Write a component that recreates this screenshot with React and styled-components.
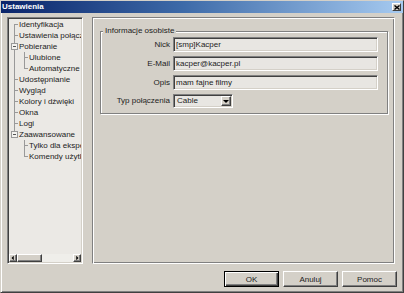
import React from 'react';
import styled, { createGlobalStyle } from 'styled-components';

const GlobalStyle = createGlobalStyle`
  html, body {
    margin: 0;
    padding: 0;
    background: #d4d0c8;
  }
  body {
    font-family: "Liberation Sans", Arial, sans-serif;
    font-size: 8px;
    color: #1c1c1c;
  }
`;

const treeItems = [
  { label: 'Identyfikacja', level: 0, first: true },
  { label: 'Ustawienia połączeń', level: 0 },
  { label: 'Pobieranie', level: 0, expander: true },
  { label: 'Ulubione', level: 1, through: true },
  { label: 'Automatyczne pobieranie', level: 1, through: true, last: true },
  { label: 'Udostępnianie', level: 0 },
  { label: 'Wygląd', level: 0 },
  { label: 'Kolory i dźwięki', level: 0 },
  { label: 'Okna', level: 0 },
  { label: 'Logi', level: 0 },
  { label: 'Zaawansowane', level: 0, last: true, expander: true },
  { label: 'Tylko dla ekspertów', level: 1 },
  { label: 'Komendy użytkownika', level: 1, last: true },
];

const fields = [
  { label: 'Nick', value: '[smp]Kacper' },
  { label: 'E-Mail', value: 'kacper@kacper.pl' },
  { label: 'Opis', value: 'mam fajne filmy' },
];

const ArrowIcon = ({ dir }) => {
  const pts = {
    left: '5,1 5,7 2,4',
    right: '3,1 3,7 6,4',
    down: '1,3 7,3 4,6',
  };
  return (
    <svg width="8" height="8" viewBox="0 0 8 8">
      <polygon points={pts[dir]} fill="#000" />
    </svg>
  );
};

const App = () => {
  return (
    <>
      <GlobalStyle />
      <Window>
        <TitleBar>
          <TitleText>Ustawienia</TitleText>
          <CloseButton aria-label="Zamknij">
            <svg width="6" height="5" viewBox="0 0 6 5">
              <path d="M0.5 0.5L5.5 4.5M5.5 0.5L0.5 4.5" stroke="#000" strokeWidth="1.4" />
            </svg>
          </CloseButton>
        </TitleBar>

        <Body>
          <ContentRow>
            <TreeBox>
              <TreeList>
                {treeItems.map((item) => (
                  <TreeRow
                    key={item.label}
                    $level={item.level}
                    $first={item.first}
                    $last={item.last}
                    $through={item.through}
                  >
                    {item.expander && <Expander />}
                    {item.label}
                  </TreeRow>
                ))}
              </TreeList>
              <HScroll>
                <ScrollButton><ArrowIcon dir="left" /></ScrollButton>
                <ScrollTrack>
                  <ScrollThumb />
                </ScrollTrack>
                <ScrollButton><ArrowIcon dir="right" /></ScrollButton>
              </HScroll>
            </TreeBox>

            <Panel>
              <GroupBox>
                <Legend>Informacje osobiste</Legend>
                <FieldGrid>
                  {fields.map((f) => (
                    <React.Fragment key={f.label}>
                      <FieldLabel>{f.label}</FieldLabel>
                      <TextField readOnly value={f.value} />
                    </React.Fragment>
                  ))}
                  <FieldLabel $short>Typ połączenia</FieldLabel>
                  <Combo>
                    <ComboValue>Cable</ComboValue>
                    <ComboButton><ArrowIcon dir="down" /></ComboButton>
                  </Combo>
                </FieldGrid>
              </GroupBox>
            </Panel>
          </ContentRow>

          <ButtonRow>
            <DialogButton $default>OK</DialogButton>
            <DialogButton>Anuluj</DialogButton>
            <DialogButton>Pomoc</DialogButton>
          </ButtonRow>
        </Body>
      </Window>
    </>
  );
};

// okno
const Window = styled.div`
  width: 404px;
  height: 293px;
  box-sizing: border-box;
  display: flex;
  flex-direction: column;
  background: #d4d0c8;
  border: 1px solid;
  border-color: #d4d0c8 #404040 #404040 #d4d0c8;
  box-shadow: inset 1px 1px #fff, inset -1px -1px #808080;
`;

const TitleBar = styled.div`
  height: 12px;
  flex-shrink: 0;
  display: flex;
  align-items: center;
  justify-content: space-between;
  padding: 0 2px 0 1px;
  background: linear-gradient(90deg, #0a246a 0%, #3d6aa8 45%, #a6caf0 100%);
`;

const TitleText = styled.span`
  color: #fff;
  font-weight: bold;
  font-size: 8px;
  line-height: 12px;
`;

const CloseButton = styled.button`
  width: 9px;
  height: 8px;
  padding: 0;
  display: flex;
  align-items: center;
  justify-content: center;
  background: #d4d0c8;
  border: 1px solid;
  border-color: #fff #404040 #404040 #fff;
`;

const Body = styled.div`
  flex: 1;
  display: flex;
  flex-direction: column;
  padding: 4px 6px 0 6px;
`;

const ContentRow = styled.div`
  display: flex;
  gap: 9px;
  height: 247px;
`;

// drzewko
const TreeBox = styled.div`
  width: 76px;
  box-sizing: border-box;
  display: flex;
  flex-direction: column;
  padding: 1px;
  background: #ebe9e5;
  border: 1px solid;
  border-color: #808080 #fff #fff #808080;
  box-shadow: inset 1px 1px #404040, inset -1px -1px #d4d0c8;
`;

const TreeList = styled.div`
  flex: 1;
  overflow: hidden;
`;

const TreeRow = styled.div`
  position: relative;
  height: 11px;
  line-height: 11px;
  padding-left: ${({ $level }) => ($level ? 20 : 10)}px;
  white-space: nowrap;
  overflow: hidden;
  background: ${({ $through }) =>
    $through ? 'linear-gradient(#999, #999) 5px 0 / 1px 100% no-repeat' : 'none'};

  &::before {
    content: '';
    position: absolute;
    left: ${({ $level }) => ($level ? 15 : 5)}px;
    top: ${({ $first }) => ($first ? '5px' : '0')};
    bottom: ${({ $last }) => ($last ? '5px' : '0')};
    border-left: 1px solid #999;
  }

  &::after {
    content: '';
    position: absolute;
    left: ${({ $level }) => ($level ? 15 : 5)}px;
    top: 5px;
    width: 4px;
    border-top: 1px solid #999;
  }
`;

const Expander = styled.span`
  position: absolute;
  left: 2px;
  top: 2px;
  width: 7px;
  height: 7px;
  box-sizing: border-box;
  border: 1px solid #999;
  background: #f4f3f0;
  z-index: 1;

  &::before {
    content: '';
    position: absolute;
    left: 1px;
    top: 2px;
    width: 3px;
    border-top: 1px solid #555;
  }
`;

const HScroll = styled.div`
  height: 8px;
  display: flex;
`;

const raised = `
  box-sizing: border-box;
  background: #d4d0c8;
  border: 1px solid;
  border-color: #fff #404040 #404040 #fff;
  box-shadow: inset -1px -1px #808080;
`;

const ScrollButton = styled.div`
  ${raised}
  width: 8px;
  height: 8px;
  display: flex;
  align-items: center;
  justify-content: center;

  svg {
    width: 6px;
    height: 6px;
  }
`;

const ScrollTrack = styled.div`
  flex: 1;
  background: #efeeea;
`;

const ScrollThumb = styled.div`
  ${raised}
  width: 25px;
  height: 8px;
`;

// panel z ustawieniami
const Panel = styled.div`
  width: 303px;
  box-sizing: border-box;
  padding: 8px 6px 0 7px;
  border: 1px solid;
  border-color: #808080 #fff #fff #808080;
  box-shadow: inset 1px 1px #fff, inset -1px -1px #808080;
`;

const GroupBox = styled.fieldset`
  margin: 0;
  padding: 0 9px 5px 2px;
  border: 1px solid #808080;
  box-shadow: inset 1px 1px #fff, 1px 1px #fff;
`;

const Legend = styled.legend`
  padding: 0 2px;
  line-height: 10px;
  font-size: 8px;
  background: #d4d0c8;
`;

const FieldGrid = styled.div`
  display: grid;
  grid-template-columns: 67px 1fr;
  column-gap: 3px;
  row-gap: 4px;
  padding-top: 1px;
`;

const FieldLabel = styled.span`
  text-align: right;
  line-height: ${({ $short }) => ($short ? 14 : 15)}px;
  white-space: nowrap;
`;

const sunken = `
  box-sizing: border-box;
  border: 1px solid;
  border-color: #808080 #fff #fff #808080;
  box-shadow: inset 1px 1px #404040, inset -1px -1px #d4d0c8;
`;

const TextField = styled.input`
  ${sunken}
  width: 100%;
  height: 15px;
  margin: 0;
  padding: 0 2px;
  background: #e8e6e2;
  font-family: "Liberation Sans", Arial, sans-serif;
  font-size: 8px;
  color: #1c1c1c;
  outline: none;
`;

const Combo = styled.div`
  ${sunken}
  width: 60px;
  height: 14px;
  display: flex;
  align-items: center;
  padding: 1px;
  background: #e8e6e2;
`;

const ComboValue = styled.span`
  flex: 1;
  padding-left: 2px;
  line-height: 12px;
`;

const ComboButton = styled.div`
  ${raised}
  width: 10px;
  height: 10px;
  display: flex;
  align-items: center;
  justify-content: center;
`;

const ButtonRow = styled.div`
  display: flex;
  justify-content: flex-end;
  gap: 4px;
  margin-top: 7px;
`;

const DialogButton = styled.button`
  width: 55px;
  height: 16px;
  padding: 0;
  box-sizing: border-box;
  background: #d4d0c8;
  font-family: "Liberation Sans", Arial, sans-serif;
  font-size: 8px;
  color: #1c1c1c;
  border: 1px solid;
  border-color: ${({ $default }) => ($default ? '#000' : '#fff #404040 #404040 #fff')};
  box-shadow: ${({ $default }) =>
    $default
      ? 'inset 1px 1px #fff, inset -1px -1px #404040, inset -2px -2px #808080'
      : 'inset -1px -1px #808080'};
`;

export default App;
